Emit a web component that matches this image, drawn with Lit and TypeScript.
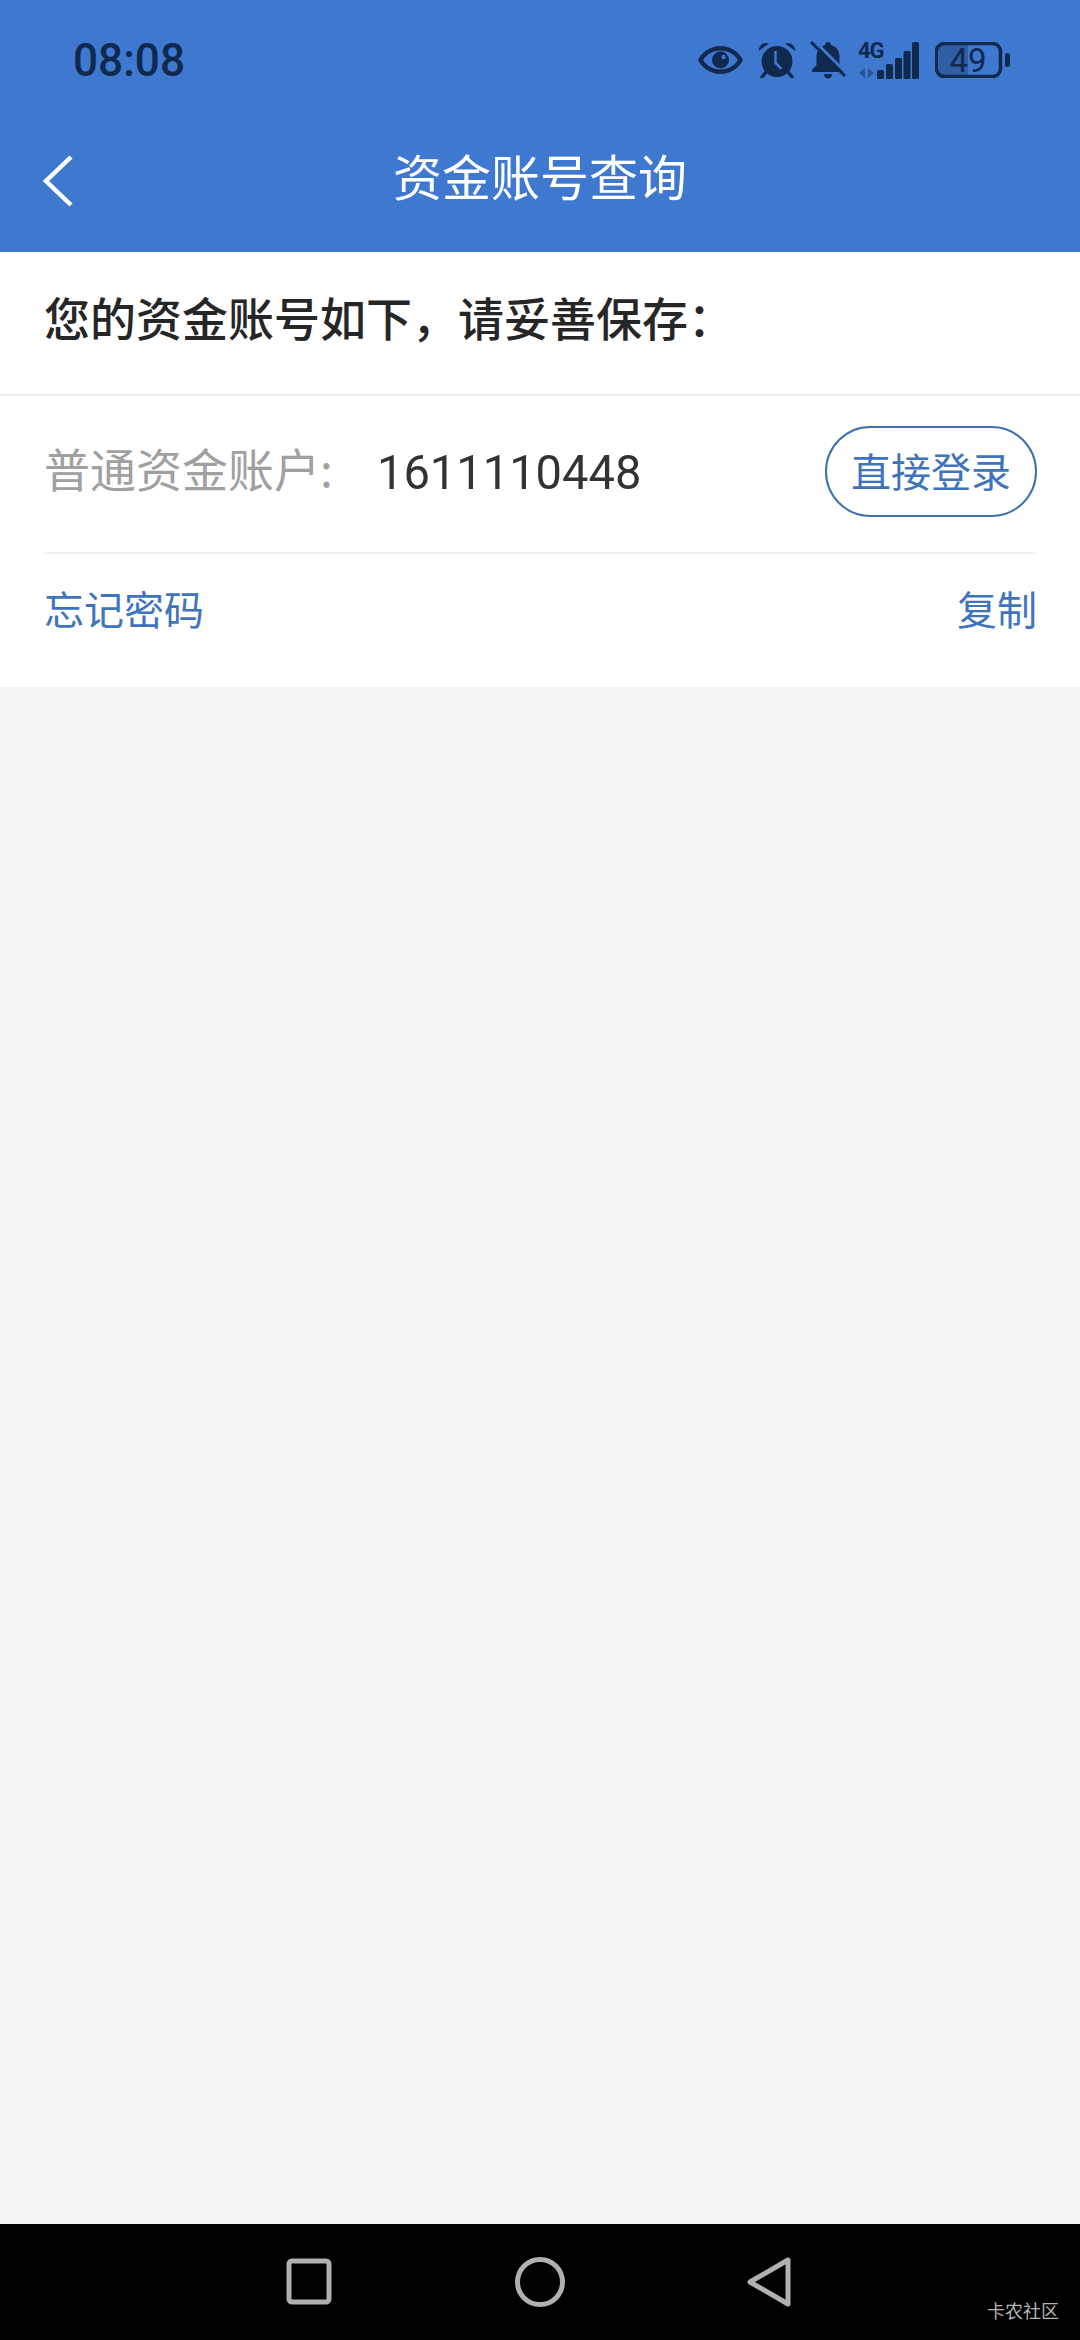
import {LitElement, html, css} from "lit";
import {customElement} from "lit/decorators.js";

@customElement("app-root")
export class AppRoot extends LitElement {
  static styles = css`
    :host {
      display: flex;
      flex-direction: column;
      width: 1080px;
      height: 2340px;
      background: #f5f5f5;
      font-family: "Noto Sans CJK SC", "Noto Sans", sans-serif;
    }
    .header {
      background: #3f78cf;
      padding-bottom: 12px;
    }
    .status {
      height: 120px;
      display: flex;
      align-items: center;
      padding: 0 69px 0 73px;
      color: #10294f;
    }
    .time {
      font: 500 47px/1 Roboto, sans-serif;
      padding-bottom: 2px;
      transform: scaleX(0.94);
      transform-origin: left center;
      flex: 1;
    }
    .icons {
      display: flex;
      align-items: center;
    }
    .icons svg {
      display: block;
      fill: #10294f;
    }
    .eye { margin-right: 15px; }
    .alarm { margin-right: 14px; }
    .bell { margin-right: 12px; }
    .signal {
      position: relative;
      margin-right: 16px;
    }
    .net {
      position: absolute;
      left: 0;
      top: -2px;
      font: 700 22px/1 Roboto, sans-serif;
      letter-spacing: -1px;
    }
    .battery {
      position: relative;
    }
    .level {
      position: absolute;
      left: 0;
      top: 0;
      width: 66px;
      height: 36px;
      display: flex;
      align-items: center;
      justify-content: center;
      font: 400 33px/1 Roboto, sans-serif;
    }
    .nav {
      height: 120px;
      position: relative;
      display: flex;
      align-items: center;
      justify-content: center;
      color: #fff;
      font-size: 49px;
      line-height: 1;
    }
    .nav span {
      padding-bottom: 11px;
    }
    .back {
      position: absolute;
      left: 42px;
      top: 35px;
    }
    .panel {
      background: #fff;
    }
    .notice {
      height: 144px;
      box-sizing: border-box;
      display: flex;
      align-items: center;
      padding: 0 0 14px 44px;
      font-size: 46px;
      font-weight: 500;
      line-height: 1;
      color: #262626;
      border-bottom: 2px solid #ececec;
    }
    .account {
      margin: 0 45px;
      height: 156px;
      display: flex;
      align-items: center;
      border-bottom: 2px solid #f0f0f0;
    }
    .label {
      font-size: 46px;
      line-height: 1;
      color: #a0a0a0;
      width: 333px;
      margin-left: -1px;
      padding-bottom: 14px;
    }
    .number {
      font: 400 49px/1 Roboto, sans-serif;
      color: #333;
      flex: 1;
      padding-bottom: 4px;
      transform: scaleX(0.96);
      transform-origin: left center;
    }
    .login {
      width: 212px;
      height: 91px;
      margin: 0 -2px 6px 0;
      padding-bottom: 3px;
      box-sizing: border-box;
      border: 2px solid #3f71ae;
      border-radius: 46px;
      display: flex;
      align-items: center;
      justify-content: center;
      font-size: 40px;
      line-height: 1;
      color: #3f74bd;
    }
    .links {
      height: 133px;
      box-sizing: border-box;
      padding: 0 43px 26px 44px;
      display: flex;
      align-items: center;
      justify-content: space-between;
      font-size: 40px;
      line-height: 1;
      color: #3f74bd;
    }
    .spacer { flex: 1; }
    .softkeys {
      height: 116px;
      background: #000;
      position: relative;
      display: flex;
      padding-top: 33px;
      box-sizing: border-box;
    }
    .softkeys svg {
      display: block;
      fill: none;
      stroke: #b0b0b0;
      stroke-width: 5;
      stroke-linejoin: round;
    }
    .recent { margin-left: 286px; }
    .home { margin-left: 183px; }
    .backkey { margin-left: 181px; }
    .mark {
      position: absolute;
      left: 987px;
      top: 77px;
      font-size: 18px;
      line-height: 1;
      color: #b4b4b4;
    }
  `;

  private renderStatusIcons() {
    return html`
      <div class="icons">
        <svg class="eye" width="45" height="28" viewBox="0 0 45 28">
          <path fill-rule="evenodd" d="M22.5 0C33 0 41.500 6.500 45 14 41.500 21.500 33 28 22.500 28S3.500 21.500 0 14C3.500 6.500 12 0 22.500 0ZM22.500 4.500C14.500 4.500 8.500 8.500 5.200 14 8.500 19.500 14.500 23.500 22.500 23.500S36.500 19.500 39.800 14C36.500 8.500 30.500 4.500 22.500 4.500Z"/>
          <circle cx="22.500" cy="14" r="8.500"/>
          <circle cx="25.500" cy="11" r="2.200" fill="#3f78cf"/>
        </svg>
        <svg class="alarm" width="38" height="36" viewBox="0 0 38 36">
          <circle cx="19" cy="19.500" r="15.500"/>
          <path d="M0.500 9C1 3.500 5.500 -0.500 11 1.500ZM37.500 9C37 3.500 32.500 -0.500 27 1.500Z"/>
          <path d="M8 30 4 35M30 30l4 5" stroke="#10294f" stroke-width="3.500" stroke-linecap="round"/>
          <path d="M17.500 9v12l6 6" fill="none" stroke="#3f78cf" stroke-width="2.500"/>
        </svg>
        <svg class="bell" width="36" height="38" viewBox="0 0 36 38">
          <path d="M18 1c1.700 0 2.800 1.200 3 3 5.500 1.500 8.500 6 8.500 11.500V24l4 5v2H2v-2l4.500-5v-8.500C6.500 10 10 5.500 15 4c.2-1.800 1.300-3 3-3ZM14 33h8c0 2.500-1.500 4.500-4 4.500s-4-2-4-4.500Z"/>
          <path d="M4.500 0 38 33.500" stroke="#3f78cf" stroke-width="3"/>
          <path d="M1 1 35 35" stroke="#10294f" stroke-width="3"/>
        </svg>
        <div class="signal">
          <span class="net">4G</span>
          <svg width="61" height="37" viewBox="0 0 61 37">
            <path d="M7 26v10l-6-5ZM10 26v10l6-5Z" opacity="0.45"/>
            <rect x="19" y="28" width="7" height="9" rx="1.500"/>
            <rect x="28" y="22" width="7" height="15" rx="1.500"/>
            <rect x="37" y="16" width="7" height="21" rx="1.500"/>
            <rect x="45.500" y="9" width="7" height="28" rx="1.500"/>
            <rect x="54" y="0" width="7" height="37" rx="1.500"/>
          </svg>
        </div>
        <div class="battery">
          <svg width="76" height="36" viewBox="0 0 76 36">
            <rect x="4" y="3" width="29" height="30" fill="#10294f" opacity="0.32"/>
            <rect x="1.500" y="1.500" width="64" height="33" rx="8" fill="none" stroke="#10294f" stroke-width="3.500"/>
            <rect x="70" y="11" width="5" height="14" rx="2.500"/>
          </svg>
          <span class="level">49</span>
        </div>
      </div>
    `;
  }

  render() {
    return html`
      <div class="header">
        <div class="status">
          <div class="time">08:08</div>
          ${this.renderStatusIcons()}
        </div>
        <div class="nav">
          <svg class="back" width="32" height="52" viewBox="0 0 32 52" fill="none" stroke="#fff" stroke-width="4.500">
            <path d="M29 2 4 26l25 24"/>
          </svg>
          <span>资金账号查询</span>
        </div>
      </div>
      <div class="panel">
        <div class="notice">您的资金账号如下，请妥善保存：</div>
        <div class="account">
          <div class="label">普通资金账户:</div>
          <div class="number">1611110448</div>
          <div class="login">直接登录</div>
        </div>
        <div class="links">
          <span>忘记密码</span>
          <span>复制</span>
        </div>
      </div>
      <div class="spacer"></div>
      <div class="softkeys">
        <svg class="recent" width="46" height="48" viewBox="0 0 46 48">
          <rect x="3" y="4" width="40" height="41" rx="3"/>
        </svg>
        <svg class="home" width="50" height="50" viewBox="0 0 50 50">
          <circle cx="25" cy="25" r="22.500"/>
        </svg>
        <svg class="backkey" width="46" height="50" viewBox="0 0 46 50">
          <path d="M42 3v44L4 25Z"/>
        </svg>
        <div class="mark">卡农社区</div>
      </div>
    `;
  }
}
